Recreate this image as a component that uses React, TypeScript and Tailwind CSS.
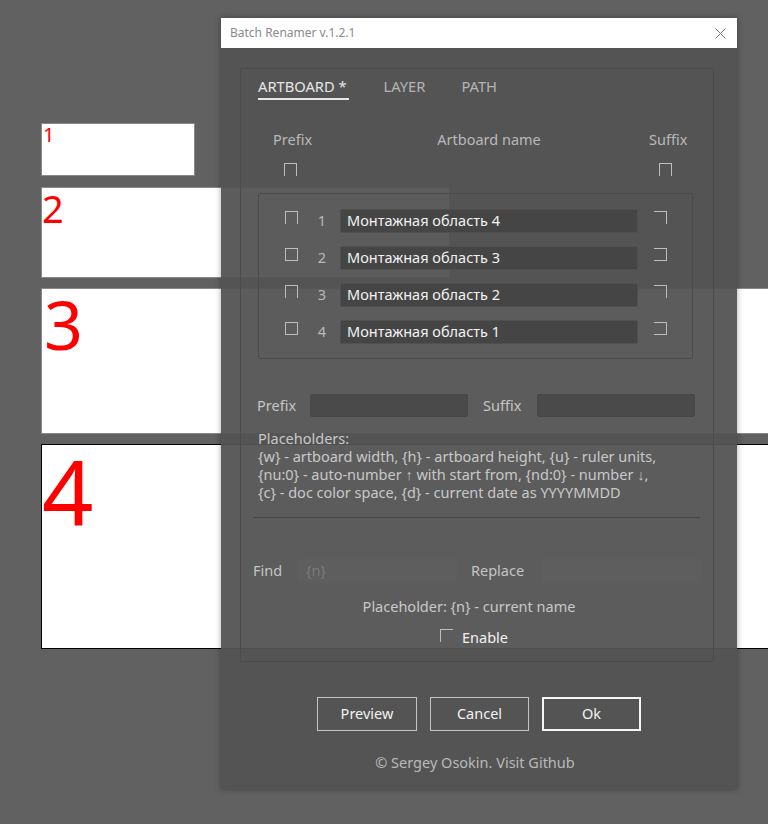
import React from 'react';

type Sides = 'full' | 'noBottom' | 'topRight' | 'topRightBottom' | 'topLeft';

const sideClass: Record<Sides, string> = {
  full: 'border border-[#bdbdbd]',
  noBottom: 'border-t border-l border-r border-[#bdbdbd]',
  topRight: 'border-t border-r border-[#bdbdbd]',
  topRightBottom: 'border-t border-r border-b border-[#bdbdbd]',
  topLeft: 'border-t border-l border-[#bdbdbd]',
};

function Check({ sides = 'noBottom' }: { sides?: Sides }) {
  return <span className={`block h-[13px] w-[13px] shrink-0 ${sideClass[sides]}`} />;
}

const rows = [
  { n: 1, name: 'Монтажная область 4', pre: 'noBottom' as Sides, suf: 'topRight' as Sides },
  { n: 2, name: 'Монтажная область 3', pre: 'full' as Sides, suf: 'topRightBottom' as Sides },
  { n: 3, name: 'Монтажная область 2', pre: 'noBottom' as Sides, suf: 'topRight' as Sides },
  { n: 4, name: 'Монтажная область 1', pre: 'full' as Sides, suf: 'topRightBottom' as Sides },
];

function Artboards() {
  return (
    <>
      <div className="absolute left-[41px] top-[123px] h-[53px] w-[154px] border border-[#8a8a8a] bg-white">
        <span className="block pl-[1px] text-[20px] leading-[22px] text-[#ff0000]">1</span>
      </div>
      <div className="absolute left-[41px] top-[187px] h-[91px] w-[409px] border border-[#8a8a8a] bg-white">
        <span className="block text-[38px] leading-[40px] text-[#ff0000]">2</span>
      </div>
      <div className="absolute left-[41px] top-[288px] h-[146px] w-[740px] border border-[#8a8a8a] bg-white">
        <span className="block pl-[2px] text-[68px] leading-[70px] text-[#ff0000]">3</span>
      </div>
      <div className="absolute left-[41px] top-[444px] h-[205px] w-[740px] border border-black bg-white">
        <span className="block text-[90px] leading-[92px] text-[#ff0000]">4</span>
      </div>
    </>
  );
}

export default function App() {
  return (
    <div
      className="relative h-[824px] w-[768px] overflow-hidden bg-[#616161] text-[14.5px]"
      style={{ fontFamily: '"Noto Sans", "Open Sans", sans-serif' }}
    >
      <Artboards />

      <div className="absolute left-[221px] top-[18px] flex h-[771px] w-[516px] flex-col bg-[#535353]/95 shadow-[0_0_6px_rgba(0,0,0,0.35)]">
        {/* title bar */}
        <div className="flex h-[30px] items-center justify-between bg-white pl-[9px] pr-[11px]">
          <span className="text-[12px] text-[#8a8a8a]">Batch Renamer v.1.2.1</span>
          <svg width="11" height="11" viewBox="0 0 11 11" className="text-[#777]">
            <path d="M0.5 0.5L10.5 10.5M10.5 0.5L0.5 10.5" stroke="currentColor" strokeWidth="1" />
          </svg>
        </div>

        <div className="pl-[19px] pr-[23px] pt-[20px]">
          <div className="flex h-[594px] flex-col rounded-[2px] border border-[#4b4b4b]">
            {/* tabs */}
            <div className="flex gap-[35px] pl-[17px] pt-[7px] text-[14.7px] leading-[20px]">
              <span className="border-b-2 border-[#e6e6e6] pb-[2px] pr-[2px] text-[#e6e6e6]">ARTBOARD *</span>
              <span className="text-[#b4b4b4]">LAYER</span>
              <span className="ml-[1px] text-[#b4b4b4]">PATH</span>
            </div>

            {/* column headers */}
            <div className="mt-[29px] flex leading-[20px] text-[#b9b9b9]">
              <span className="ml-[32px] w-[60px]">Prefix</span>
              <span className="w-[312px] text-center">Artboard name</span>
              <span className="ml-[4px]">Suffix</span>
            </div>
            <div className="mt-[14px] flex">
              <span className="ml-[43px]">
                <Check />
              </span>
              <span className="ml-[362px]">
                <Check />
              </span>
            </div>

            {/* artboard list */}
            <div className="ml-[17px] mr-[20px] mt-[17px] flex flex-col gap-[13px] rounded-[2px] border border-[#4b4b4b] pb-[14px] pt-[15px]">
              {rows.map((r) => (
                <div key={r.n} className="flex h-[24px] items-center pl-[26px]">
                  <span className="-mt-[8px]">
                    <Check sides={r.pre} />
                  </span>
                  <span className="w-[42px] pl-[6px] text-center text-[#b9b9b9]">{r.n}</span>
                  <div className="flex h-[24px] w-[298px] items-center rounded-[2px] border border-[#505050] bg-[#454545] px-[6px] text-[#f2f2f2]">
                    {r.name}
                  </div>
                  <span className="-mt-[8px] ml-[16px]">
                    <Check sides={r.suf} />
                  </span>
                </div>
              ))}
            </div>

            {/* prefix / suffix inputs */}
            <div className="mt-[35px] flex items-center pl-[16px] text-[#c4c4c4]">
              <span className="w-[53px]">Prefix</span>
              <div className="h-[23px] w-[158px] rounded-[2px] border border-[#474747] bg-[#4a4a4a]" />
              <span className="ml-[15px] w-[54px]">Suffix</span>
              <div className="h-[23px] w-[158px] rounded-[2px] border border-[#474747] bg-[#4a4a4a]" />
            </div>

            {/* placeholders */}
            <div className="mt-[12px] pl-[17px] leading-[18px] text-[#c8c8c8]">
              <p>Placeholders:</p>
              <p>{'{w} - artboard width, {h} - artboard height, {u} - ruler units,'}</p>
              <p>{'{nu:0} - auto-number ↑ with start from, {nd:0} - number ↓,'}</p>
              <p>{'{c} - doc color space, {d} - current date as YYYYMMDD'}</p>
            </div>

            <div className="ml-[12px] mt-[16px] h-px w-[447px] bg-[#464646]" />

            {/* find / replace */}
            <div className="mt-[41px] flex items-center pl-[12px] text-[#c4c4c4]">
              <span className="w-[45px]">Find</span>
              <div className="flex h-[24px] w-[159px] items-center rounded-[2px] bg-[#5e5e5e] px-[8px] text-[#7a7a7a]">
                {'{n}'}
              </div>
              <span className="ml-[14px] w-[70px]">Replace</span>
              <div className="h-[24px] w-[160px] rounded-[2px] bg-[#5e5e5e]" />
            </div>

            <p className="mr-[16px] mt-[13px] text-center leading-[20px] text-[#c8c8c8]">
              {'Placeholder: {n} - current name'}
            </p>
            <div className="mt-[11px] flex items-center justify-center gap-[9px] pr-[6px]">
              <span className="-mt-[4px]">
                <Check sides="topLeft" />
              </span>
              <span className="leading-[20px] text-[#f2f2f2]">Enable</span>
            </div>
          </div>
        </div>

        {/* buttons */}
        <div className="mt-[35px] flex justify-center gap-[13px] text-[#f2f2f2]">
          <button className="h-[34px] w-[100px] border border-[#c4c4c4]">Preview</button>
          <button className="h-[34px] w-[99px] border border-[#c4c4c4]">Cancel</button>
          <button className="h-[34px] w-[99px] border-2 border-[#f5f5f5]">Ok</button>
        </div>

        <p className="mt-[21px] pr-[8px] text-center leading-[20px] text-[#b9b9b9]">
          © Sergey Osokin. Visit Github
        </p>
      </div>
    </div>
  );
}
